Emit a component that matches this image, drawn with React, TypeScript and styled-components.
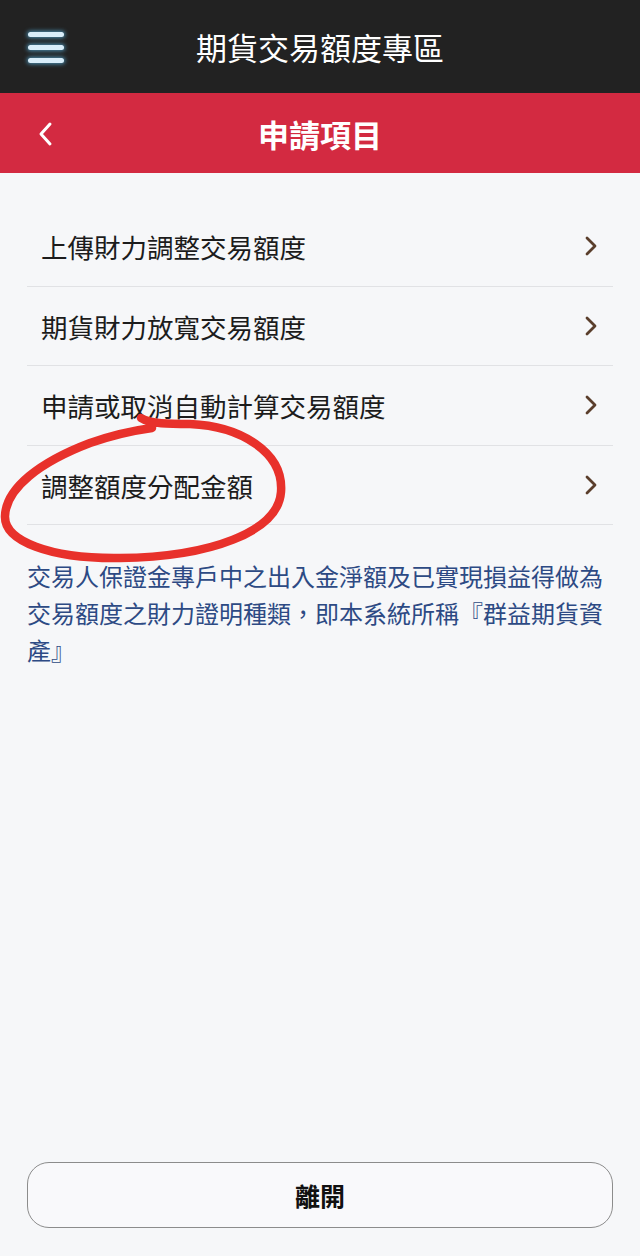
import React from "react";
import styled, { createGlobalStyle } from "styled-components";

const GlobalStyle = createGlobalStyle`
  * { box-sizing: border-box; }
  html, body { margin: 0; padding: 0; background: #f6f7f9; }
  body { font-family: "Noto Sans CJK TC", "Noto Sans", sans-serif; }
`;

const Page = styled.div`
  position: relative;
  display: flex;
  flex-direction: column;
  min-height: 1256px;
  width: 640px;
  background: #f6f7f9;
`;

const TopBar = styled.header`
  position: relative;
  height: 93px;
  background: #222222;
  display: flex;
  align-items: center;
  justify-content: center;
`;

const MenuButton = styled.div`
  position: absolute;
  left: 28px;
  top: 32px;
  width: 36px;
  display: flex;
  flex-direction: column;
  gap: 8px;
`;

const MenuBar = styled.span`
  display: block;
  height: 5px;
  border-radius: 3px;
  background: #d9eefa;
  box-shadow: 0 0 4px 1px rgba(90, 180, 225, 0.75);
`;

const TopTitle = styled.h1`
  margin: 0;
  font-size: 31px;
  font-weight: 400;
  color: #ffffff;
  line-height: 1;
`;

const SubBar = styled.div`
  position: relative;
  height: 80px;
  background: #d32a41;
  display: flex;
  align-items: center;
  justify-content: center;
`;

const BackButton = styled.div`
  position: absolute;
  left: 36px;
  top: 28px;
  width: 20px;
  height: 26px;
  display: flex;
`;

const SubTitle = styled.h2`
  margin: 0;
  font-size: 31px;
  font-weight: 700;
  color: #ffffff;
  line-height: 1;
`;

const Content = styled.main`
  flex: 1;
  padding: 34px 27px 0;
  display: flex;
  flex-direction: column;
`;

const List = styled.ul`
  list-style: none;
  margin: 0;
  padding: 0;
`;

const Row = styled.li`
  height: 79.5px;
  display: flex;
  align-items: center;
  justify-content: space-between;
  padding: 0 14px 0 14px;
  border-bottom: 1.5px solid #e1e2e5;
`;

const RowLabel = styled.span`
  font-size: 26.5px;
  color: #1c1c1c;
  line-height: 1;
  padding-top: 2px;
`;

const Note = styled.p`
  margin: 32px 0 0;
  font-size: 24px;
  line-height: 37px;
  color: #2d4a84;
`;

const Footer = styled.footer`
  padding: 0 27px 28px;
`;

const LeaveButton = styled.button`
  width: 100%;
  height: 66px;
  border: 1.5px solid #8c8c8c;
  border-radius: 22px;
  background: #f9f9fb;
  font-family: "Noto Sans CJK TC", "Noto Sans", sans-serif;
  font-size: 25px;
  font-weight: 700;
  color: #111111;
  cursor: pointer;
`;

const Annotation = styled.svg`
  position: absolute;
  left: 0;
  top: 0;
  pointer-events: none;
`;

const Chevron = () => (
  <svg width="16" height="22" viewBox="0 0 16 22">
    <path d="M4 3 L12 11 L4 19" fill="none" stroke="#5a3e2c" strokeWidth="2.8" strokeLinecap="round" strokeLinejoin="round" />
  </svg>
);

const items = [
  "上傳財力調整交易額度",
  "期貨財力放寬交易額度",
  "申請或取消自動計算交易額度",
  "調整額度分配金額",
];

export default function App() {
  return (
    <>
      <GlobalStyle />
      <Page>
        <TopBar>
          <MenuButton>
            <MenuBar />
            <MenuBar />
            <MenuBar />
          </MenuButton>
          <TopTitle>期貨交易額度專區</TopTitle>
        </TopBar>
        <SubBar>
          <BackButton>
            <svg width="20" height="26" viewBox="0 0 20 26">
              <path d="M14 3 L5 13 L14 23" fill="none" stroke="#ffffff" strokeWidth="3" strokeLinecap="round" strokeLinejoin="round" />
            </svg>
          </BackButton>
          <SubTitle>申請項目</SubTitle>
        </SubBar>
        <Content>
          <List>
            {items.map((t) => (
              <Row key={t}>
                <RowLabel>{t}</RowLabel>
                <Chevron />
              </Row>
            ))}
          </List>
          <Note>
            交易人保證金專戶中之出入金淨額及已實現損益得做為交易額度之財力證明種類，即本系統所稱『群益期貨資產』
          </Note>
        </Content>
        <Footer>
          <LeaveButton>離開</LeaveButton>
        </Footer>
        <Annotation width="640" height="1256" viewBox="0 0 640 1256">
          <path
            d="M141 418 C 150 424, 170 424, 190 424 C 240 426, 284 452, 281 492 C 278 532, 210 557, 120 558 C 50 559, 4 541, 5 516 C 6 488, 40 462, 90 443 C 110 436, 130 431, 152 428"
            fill="none"
            stroke="#e8312b"
            strokeWidth="8.5"
            strokeLinecap="round"
            strokeLinejoin="round"
          />
        </Annotation>
      </Page>
    </>
  );
}
